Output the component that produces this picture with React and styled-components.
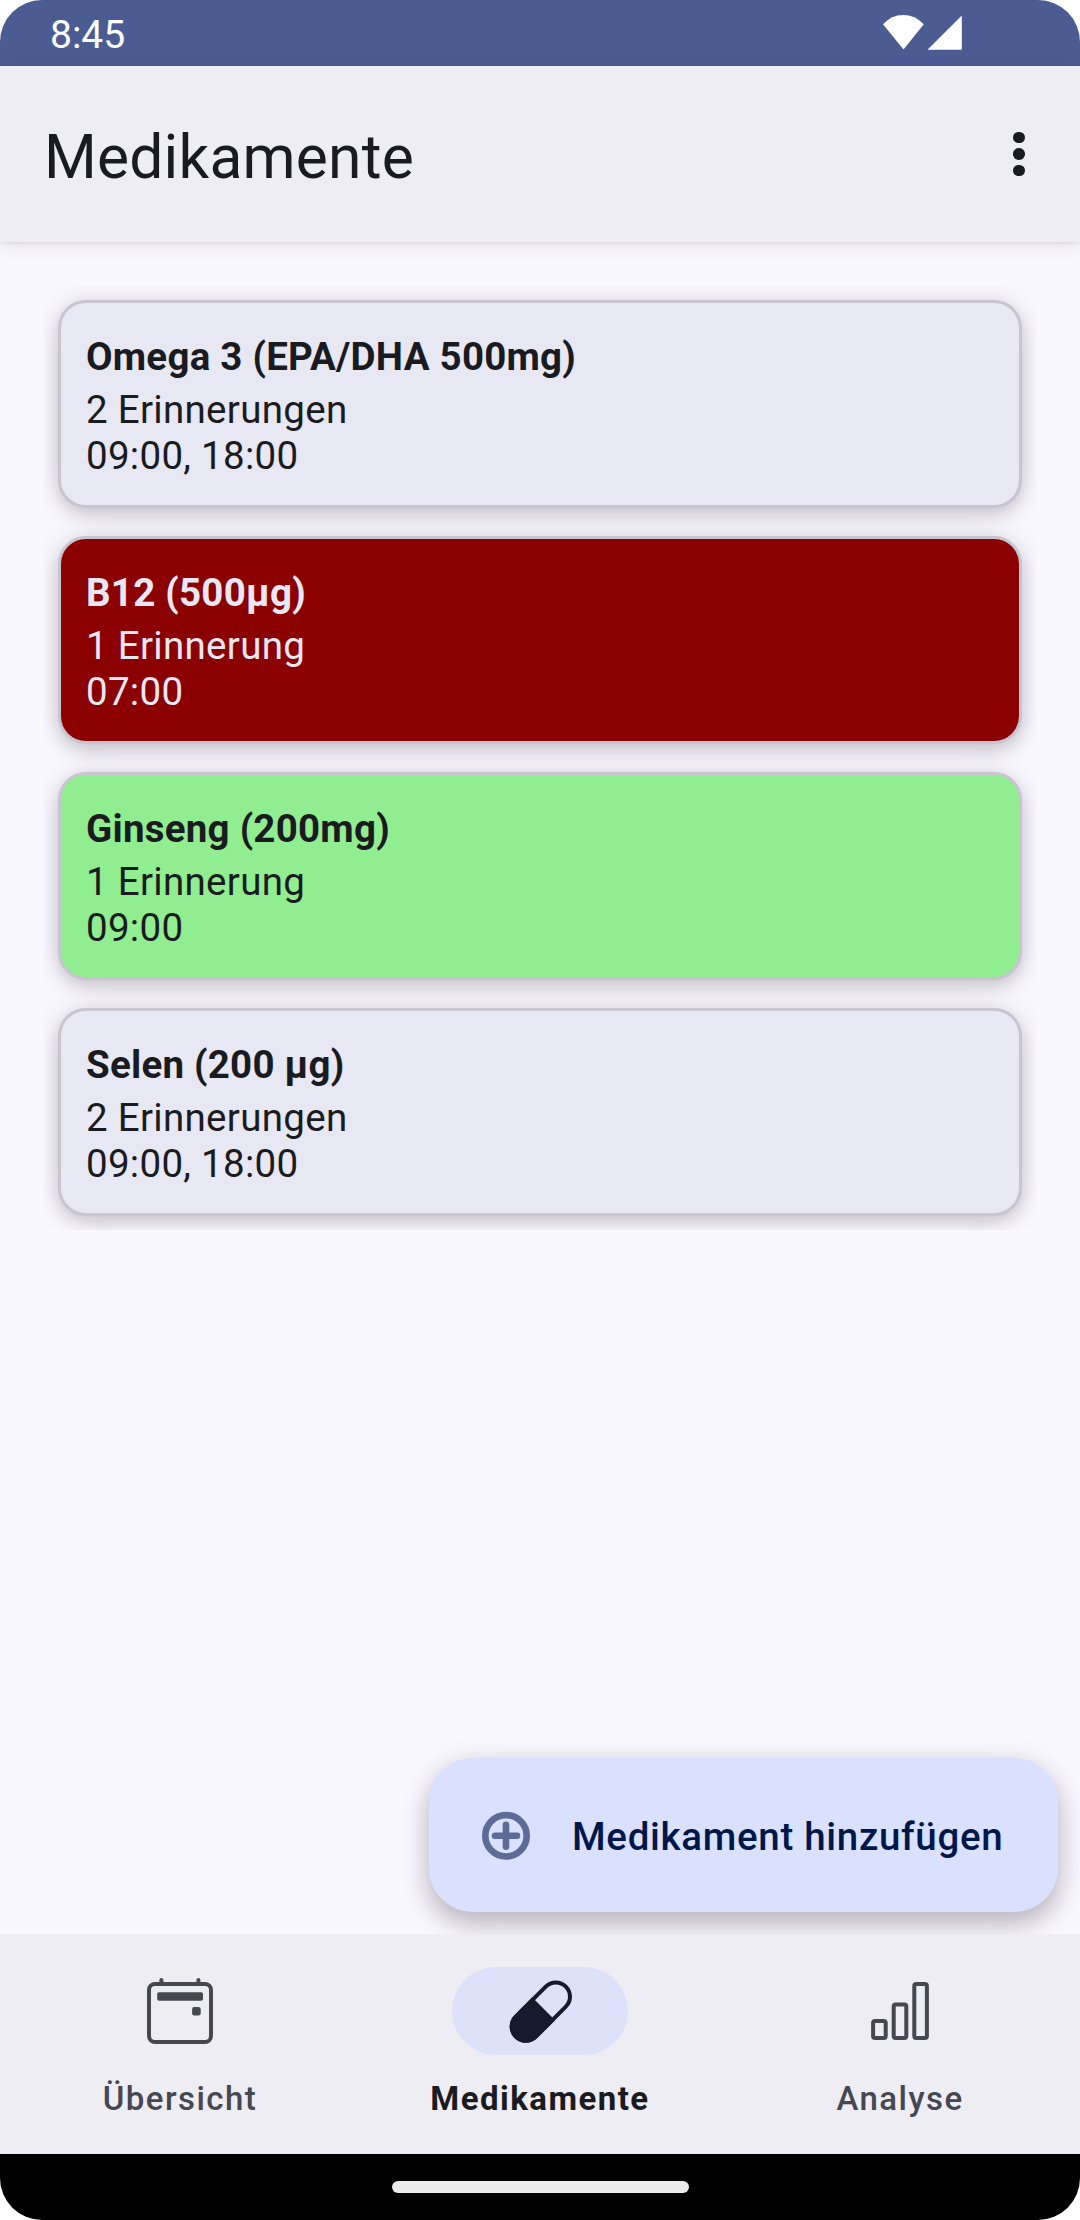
import React from "react";
import styled, { createGlobalStyle } from "styled-components";

const Global = createGlobalStyle`
  * { box-sizing: border-box; }
  body { margin: 0; background: #fff; font-family: Roboto, "Noto Sans", sans-serif; }
`;

const Screen = styled.div`
  width: 1080px;
  height: 2220px;
  display: flex;
  flex-direction: column;
  overflow: hidden;
  border-radius: 42px;
  background: #faf8ff;
  color: #1a1b20;
`;

const StatusBar = styled.header`
  height: 66px;
  flex: none;
  display: flex;
  align-items: center;
  justify-content: space-between;
  padding: 4px 118px 0 50px;
  background: #4a5c92;
  color: #fff;
  font-size: 39px;
  line-height: 46px;
`;

const StatusIcons = styled.svg`
  width: 80px;
  height: 36px;
  display: block;
  margin-top: -6px;
`;

const AppBar = styled.div`
  height: 176px;
  flex: none;
  display: flex;
  align-items: center;
  justify-content: space-between;
  padding: 8px 50px 0 44px;
  background: #eeedf4;
  box-shadow: 0 1px 3px rgba(40, 30, 50, 0.08), 0 4px 16px rgba(40, 30, 50, 0.11);
`;

const Title = styled.h1`
  margin: 0;
  font-size: 60.5px;
  font-weight: 400;
  letter-spacing: 0.2px;
  line-height: 72px;
`;

const MenuButton = styled.button`
  width: 22px;
  height: 56px;
  margin-top: -8px;
  padding: 0;
  border: 0;
  background: none;
  display: flex;
  flex-direction: column;
  align-items: center;
  justify-content: center;
  gap: 5px;
`;

const Dot = styled.span`
  width: 11.5px;
  height: 11.5px;
  border-radius: 50%;
  background: #1a1b20;
`;

const Content = styled.main`
  flex: 1;
  min-height: 0;
  padding: 44px 44px 0;
  display: flex;
  flex-direction: column;
  justify-content: space-between;
`;

const List = styled.ul`
  list-style: none;
  margin: 0;
  padding: 14px;
  display: flex;
  flex-direction: column;
  gap: 28px;
  overflow: hidden;
`;

const Card = styled.li`
  height: 208px;
  padding: 31px 25px 0;
  border: 3px solid #c8c4d0;
  border-radius: 28px;
  background: ${(p) => p.$bg || "#e8e8f4"};
  color: ${(p) => p.$fg || "#1a1b20"};
  box-shadow: 0 6px 16px rgba(40, 30, 50, 0.17), 0 2px 30px rgba(40, 30, 50, 0.13);
  font-size: 38.5px;
  letter-spacing: 0.3px;
  line-height: 46px;
`;

const Name = styled.h2`
  margin: 0 0 7px;
  font-size: 38.5px;
  font-weight: 700;
  letter-spacing: 0.24px;
  line-height: 46px;
`;

const Line = styled.p`
  margin: 0;
`;

const Fab = styled.button`
  width: 629px;
  height: 154px;
  margin: 0 -22px 22px 0;
  padding: 0 0 0 50px;
  align-self: flex-end;
  display: flex;
  align-items: center;
  gap: 40px;
  border: 0;
  border-radius: 44px;
  background: #dae1ff;
  color: #00174b;
  font: 500 38.5px/46px Roboto, "Noto Sans", sans-serif;
  letter-spacing: 0.69px;
  box-shadow: 0 14px 26px rgba(40, 30, 50, 0.22), 0 4px 30px rgba(40, 30, 50, 0.14);
`;

const FabIcon = styled.svg`
  width: 53px;
  height: 53px;
  flex: none;
`;

const FabLabel = styled.span`
  padding-top: 3px;
`;

const NavBar = styled.nav`
  height: 220px;
  flex: none;
  position: relative;
  display: grid;
  grid-template-columns: repeat(3, 1fr);
  background: #eeedf4;
`;

const NavItem = styled.a`
  display: flex;
  flex-direction: column;
  align-items: center;
  padding-top: 33px;
  color: ${(p) => (p.$active ? "#1a1b20" : "#464751")};
  font-size: 33px;
  font-weight: ${(p) => (p.$active ? 700 : 500)};
  letter-spacing: 1.46px;
  line-height: 40px;
`;

const Indicator = styled.span`
  width: 176px;
  height: 88px;
  margin-bottom: 24px;
  display: flex;
  align-items: center;
  justify-content: center;
  border-radius: 44px;
  background: ${(p) => (p.$active ? "#dde1f9" : "transparent")};
`;

const NavIcon = styled.svg`
  width: 66px;
  height: 66px;
  fill: none;
  stroke-width: 4;
  stroke: ${(p) => (p.$active ? "#151b2c" : "#464751")};
`;

const GestureBar = styled.footer`
  height: 66px;
  flex: none;
  display: flex;
  align-items: center;
  justify-content: center;
  background: #000;
`;

const Handle = styled.div`
  width: 297px;
  height: 12px;
  border-radius: 6px;
  background: #ebebeb;
`;

const medications = [
  { name: "Omega 3 (EPA/DHA 500mg)", reminders: "2 Erinnerungen", times: "09:00, 18:00" },
  { name: "B12 (500µg)", reminders: "1 Erinnerung", times: "07:00", bg: "#8b0000", fg: "#e8e8f4" },
  { name: "Ginseng (200mg)", reminders: "1 Erinnerung", times: "09:00", bg: "#90ee90" },
  { name: "Selen (200 µg)", reminders: "2 Erinnerungen", times: "09:00, 18:00" },
];

export default function App() {
  return (
    <>
      <Global />
      <Screen>
        <StatusBar>
          <span>8:45</span>
          <StatusIcons viewBox="0 0 80 36" fill="#fff">
            <path d="M1 10.3Q9.5 1 21.3 1T41.8 10.3L21.5 35.5Z" />
            <path d="M79.8 1.5V35.7H45.5Z" />
          </StatusIcons>
        </StatusBar>
        <AppBar>
          <Title>Medikamente</Title>
          <MenuButton aria-label="Menü">
            <Dot />
            <Dot />
            <Dot />
          </MenuButton>
        </AppBar>
        <Content>
          <List>
            {medications.map((m) => (
              <Card key={m.name} $bg={m.bg} $fg={m.fg}>
                <Name>{m.name}</Name>
                <Line>{m.reminders}</Line>
                <Line>{m.times}</Line>
              </Card>
            ))}
          </List>
          <Fab>
            <FabIcon viewBox="0 0 53 53" fill="none" stroke="#5c6c96" strokeWidth="6.6">
              <circle cx="27" cy="26.8" r="20.7" />
              <path d="M27 15.8v22M16 26.8h22" strokeLinecap="round" />
            </FabIcon>
            <FabLabel>Medikament hinzufügen</FabLabel>
          </Fab>
        </Content>
        <NavBar>
          <NavItem>
            <Indicator>
              <NavIcon viewBox="0 0 66 66">
                <rect x="2" y="6" width="62" height="58" rx="6" />
                <path d="M14.4 6V2M51.4 6V2" strokeLinecap="round" />
                <rect x="10.2" y="14.3" width="45.8" height="8.5" rx="1.8" fill="#464751" stroke="none" />
                <rect x="45.1" y="29" width="8.6" height="8.5" rx="2.2" fill="#464751" stroke="none" />
              </NavIcon>
            </Indicator>
            Übersicht
          </NavItem>
          <NavItem $active>
            <Indicator $active>
              <NavIcon $active viewBox="0 0 66 66">
                <g transform="translate(33.8 33.6) rotate(-45)">
                  <rect x="-35.4" y="-14.2" width="70.8" height="28.4" rx="14.2" />
                  <path d="M2 -14.2H-21.2A14.2 14.2 0 0 0 -21.2 14.2H2Z" fill="#151b2c" />
                </g>
              </NavIcon>
            </Indicator>
            Medikamente
          </NavItem>
          <NavItem>
            <Indicator>
              <NavIcon viewBox="0 0 66 66">
                <rect x="6.1" y="43.1" width="12.6" height="16.8" rx="2" />
                <rect x="26.7" y="26.5" width="12.6" height="33.4" rx="2" />
                <rect x="47.3" y="6.1" width="12.6" height="53.8" rx="2" />
              </NavIcon>
            </Indicator>
            Analyse
          </NavItem>
        </NavBar>
        <GestureBar>
          <Handle />
        </GestureBar>
      </Screen>
    </>
  );
}
